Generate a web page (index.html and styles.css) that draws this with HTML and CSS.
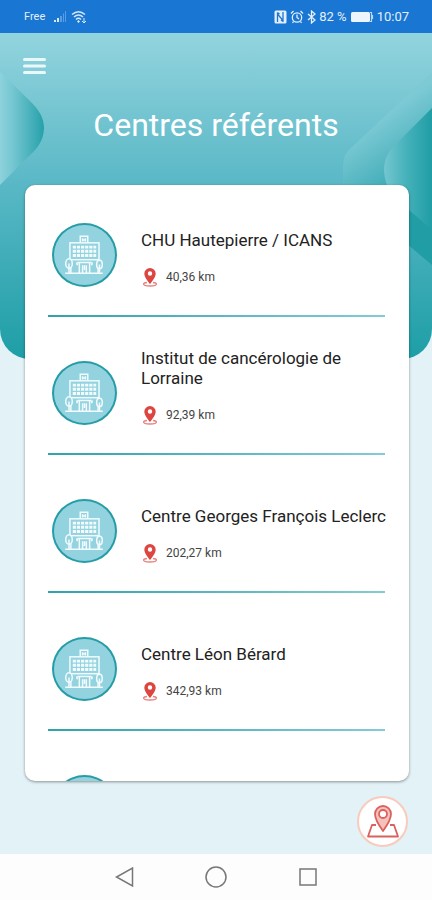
FILE: index.html
```html
<!DOCTYPE html>
<html lang="fr">
<head>
  <meta charset="UTF-8">
  <meta name="viewport" content="width=device-width, initial-scale=1.0">
  <title>Centres référents</title>
  <link rel="stylesheet" href="styles.css">
</head>
<body>
  <!-- shared icons -->
  <svg class="sprite" aria-hidden="true">
    <symbol id="hospital" viewBox="0 0 64 64">
      <g fill="none" stroke="#f2fbfd" stroke-width="1.6">
        <path d="M28 19v-7h8v7M30.500 17.500v-3.500M33.500 17.500v-3.500M30 16h4"/>
        <rect x="17" y="19" width="31" height="18"/>
        <path d="M20 23.500h25M20 28h25M20 32.500h25" stroke-width="3" stroke-dasharray="3.400 1"/>
        <path d="M18 37v14M47 37v14M25 40h15M27 40v11M38 40v11M24 40l1 3M41 40l-1 3M32.500 43v5M30.500 43v8M34.500 43v8M12 51.500h40"/>
        <ellipse cx="16" cy="41" rx="3.500" ry="5" fill="#93d3e0"/>
        <ellipse cx="48.500" cy="42" rx="3" ry="4.500" fill="#93d3e0"/>
        <path d="M16 41v10M48.500 42v9"/>
      </g>
    </symbol>
    <symbol id="pin" viewBox="0 0 16 20">
      <path d="M5 15.500c-2.200.3-3.500.9-3.500 1.600C1.500 18.200 4.500 19 8 19s6.500-.8 6.500-1.900c0-.7-1.300-1.300-3.500-1.600" fill="none" stroke="#e8837f" stroke-width="1.300"/>
      <path d="M8 1a5.700 5.700 0 0 0-5.700 5.700C2.300 10.500 8 17 8 17s5.700-6.500 5.700-10.300A5.700 5.700 0 0 0 8 1zm0 3.300a2.200 2.200 0 1 1 0 4.400 2.200 2.200 0 0 1 0-4.400z" fill="#dc4540" fill-rule="evenodd"/>
    </symbol>
  </svg>

  <div class="status-bar">
    <div class="status-group">
      <span class="carrier">Free</span>
      <svg width="14" height="12" viewBox="0 0 14 12">
        <path d="M1 9h2v2H1zM4 7h2v4H4z" fill="#d6e8fa"/>
        <path d="M7 5h2v6H7zM10 2.500h1v8.500h-1zM12 0h1v11h-1z" fill="#5b9de2"/>
      </svg>
      <svg width="16" height="14" viewBox="0 0 16 14">
        <path d="M1 4.500Q7.500-1 14 4.500M3 7q4.500-4 9 0M5 9.500q2.500-2.500 5 0" fill="none" stroke="#d6e8fa" stroke-width="1.500"/>
        <path d="M7.500 10l-1.500 1.500 1.500 1.500L9 11.500z" fill="#d6e8fa"/>
        <path d="M13 8v5M11 11l2 2 2-2" fill="none" stroke="#d6e8fa"/>
      </svg>
    </div>
    <div class="status-group status-right">
      <svg width="13" height="14" viewBox="0 0 13 14">
        <rect x="0.500" y="0.500" width="12" height="13" rx="1.500" fill="#e4effb"/>
        <path d="M3.500 12V4l5.500 6.500V2M3.500 2.500l2 1.500M9 11.500L7 10" fill="none" stroke="#1976d2" stroke-width="1.300"/>
      </svg>
      <svg width="14" height="14" viewBox="0 0 14 14" fill="none" stroke="#e4effb" stroke-width="1.300">
        <circle cx="7" cy="7.500" r="4.700"/>
        <path d="M7 4.500v3l2 1.500M1 3.500L3.500 1M13 3.500L10.500 1M3.500 11.500L2.500 13M10.500 11.500l1 1.500"/>
      </svg>
      <svg width="9" height="14" viewBox="0 0 9 14" fill="none" stroke="#e4effb" stroke-width="1.300">
        <path d="M1 4l7 6-3.500 3V1L8 4l-7 6"/>
      </svg>
      <span>82 %</span>
      <svg width="24" height="12" viewBox="0 0 24 12">
        <rect x="1" y="1" width="19" height="10" rx="1.500" fill="#eef5fc"/>
        <path d="M20 1.500h1.500v9H20M22.500 4v4" fill="none" stroke="#b9d7f5" stroke-width="1.200"/>
      </svg>
      <span class="clock">10:07</span>
    </div>
  </div>

  <main class="screen">
    <header class="header">
      <svg class="deco deco-left" width="46" height="120" viewBox="0 0 46 120">
        <defs>
          <linearGradient id="leftFade">
            <stop offset="0" stop-color="#8dd2dc"/>
            <stop offset="0.300" stop-color="#74c6d1"/>
            <stop offset="1" stop-color="#26a1aa"/>
          </linearGradient>
        </defs>
        <path d="M0 2L31 32C38 39 44 47 44 58C44 70 37 79 30 85L0 115z" fill="url(#leftFade)"/>
      </svg>
      <svg class="deco deco-right" width="92" height="200" viewBox="0 0 92 200">
        <defs>
          <linearGradient id="band" gradientUnits="userSpaceOnUse" x1="30" y1="55" x2="62" y2="100">
            <stop offset="0" stop-color="#7dcad5"/>
            <stop offset="1" stop-color="#46afba"/>
          </linearGradient>
          <linearGradient id="rightFade">
            <stop offset="0" stop-color="#74c6d0"/>
            <stop offset="0.500" stop-color="#42b0b9"/>
            <stop offset="1" stop-color="#209da5"/>
          </linearGradient>
        </defs>
        <path d="M92 2L9 80C3 86 3 92 3 104V120L60 166L92 160z" fill="url(#band)"/>
        <path d="M60 130L92 158V195L60 168z" fill="#209da5"/>
        <path d="M92 38L54 76C44 86 42 98 46 112C50 126 60 132 69 140L92 160z" fill="url(#rightFade)"/>
      </svg>
      <button class="menu-button" type="button" aria-label="Menu">
        <svg width="24" height="18" viewBox="0 0 24 18">
          <path d="M1.500 2.500h20M1.500 9h20M1.500 15.500h20" stroke="#eaf8fa" stroke-width="3" stroke-linecap="round"/>
        </svg>
      </button>
      <h1>Centres référents</h1>
    </header>

    <section class="card">
      <ul class="centers">
        <li class="center">
          <span class="avatar"><svg width="60" height="60"><use href="#hospital"/></svg></span>
          <div class="info">
            <h2>CHU Hautepierre / ICANS</h2>
            <p class="distance"><svg width="18" height="20"><use href="#pin"/></svg>40,36 km</p>
          </div>
        </li>
        <li class="center">
          <span class="avatar"><svg width="60" height="60"><use href="#hospital"/></svg></span>
          <div class="info">
            <h2>Institut de cancérologie de Lorraine</h2>
            <p class="distance"><svg width="18" height="20"><use href="#pin"/></svg>92,39 km</p>
          </div>
        </li>
        <li class="center">
          <span class="avatar"><svg width="60" height="60"><use href="#hospital"/></svg></span>
          <div class="info">
            <h2>Centre Georges François Leclerc</h2>
            <p class="distance"><svg width="18" height="20"><use href="#pin"/></svg>202,27 km</p>
          </div>
        </li>
        <li class="center">
          <span class="avatar"><svg width="60" height="60"><use href="#hospital"/></svg></span>
          <div class="info">
            <h2>Centre Léon Bérard</h2>
            <p class="distance"><svg width="18" height="20"><use href="#pin"/></svg>342,93 km</p>
          </div>
        </li>
        <li class="center">
          <span class="avatar"><svg width="60" height="60"><use href="#hospital"/></svg></span>
        </li>
      </ul>
    </section>

    <button class="map-button" type="button" aria-label="Carte">
      <svg width="34" height="36" viewBox="0 0 34 36" fill="none" stroke="#d9625f" stroke-width="1.800" stroke-linejoin="round">
        <path d="M10 21H6L2 32.500h30L28 21h-4"/>
        <path d="M17 2a8 8 0 0 0-8 8c0 6 8 17 8 17s8-11 8-17a8 8 0 0 0-8-8z" fill="#f8c0bb"/>
        <circle cx="17" cy="10" r="4" fill="#fff"/>
      </svg>
    </button>
  </main>

  <nav class="nav-bar">
    <button type="button" aria-label="Retour">
      <svg width="22" height="22" viewBox="0 0 22 22"><path d="M19.500 2v18L3.500 11z"/></svg>
    </button>
    <button type="button" aria-label="Accueil">
      <svg width="22" height="22" viewBox="0 0 22 22"><circle cx="11" cy="11" r="10"/></svg>
    </button>
    <button type="button" aria-label="Applications">
      <svg width="22" height="22" viewBox="0 0 22 22"><rect x="3" y="3" width="16" height="16"/></svg>
    </button>
  </nav>
</body>
</html>
```
FILE: styles.css
```css
* {
  box-sizing: border-box;
}
body {
  margin: 0;
  height: 100vh;
  display: flex;
  flex-direction: column;
  background: #e2f2f7;
  font-family: Roboto, "Liberation Sans", sans-serif;
  color: #222;
}
h1, h2, p, ul {
  margin: 0;
  padding: 0;
  font-weight: 400;
}
button {
  border: 0;
  padding: 0;
  background: none;
  cursor: pointer;
}
svg {
  display: block;
}
.sprite {
  display: none;
}

/* status bar */
.status-bar {
  display: flex;
  flex: none;
  justify-content: space-between;
  align-items: center;
  height: 33px;
  padding: 0 23px 0 24px;
  background: #1976d2;
  color: #e4effb;
  font-size: 13px;
}
.status-group {
  display: flex;
  align-items: center;
  gap: 4px;
}
.status-right {
  gap: 3px;
}
.carrier {
  margin-right: 4px;
  font-size: 11px;
}

/* header */
.screen {
  position: relative;
  display: flex;
  flex-direction: column;
  flex: 1;
  min-height: 0;
}
.header {
  position: relative;
  flex: none;
  height: 326px;
  padding: 24px 23px;
  overflow: hidden;
  border-radius: 0 0 30px 30px;
  background: linear-gradient(#92d4de, #5ab8c6 46%, #1d9ea6);
}
.deco {
  position: absolute;
}
.deco-left {
  top: 37px;
  left: 0;
}
.deco-right {
  top: 37px;
  right: 0;
}
.menu-button {
  position: relative;
  display: block;
}
.header h1 {
  position: relative;
  margin-top: 30px;
  color: #fff;
  font-size: 32px;
  line-height: 40px;
  text-align: center;
}

/* list */
.card {
  position: relative;
  flex: 1;
  min-height: 0;
  margin: -174px 23px 73px 25px;
  padding: 0 24px 0 23px;
  overflow: hidden;
  border-radius: 10px;
  background: #fff;
  box-shadow: 0 1px 3px rgba(0, 0, 0, 0.4);
}
.centers {
  list-style: none;
}
.center {
  display: flex;
  align-items: flex-end;
  gap: 24px;
  min-height: 138px;
  padding: 20px 0 28px 4px;
  border-bottom: 2px solid;
  border-image: linear-gradient(to right, #2fa3ac, #84cbd5) 1;
}
.center:first-child {
  min-height: 132px;
}
.avatar {
  flex: none;
  width: 65px;
  height: 64px;
  border: 2px solid #269ca6;
  border-radius: 50%;
  background: #93d3e0;
}
.info {
  flex: 1;
  margin-right: -12px;
}
.info h2 {
  font-size: 17px;
  line-height: 20px;
}
.distance {
  display: flex;
  align-items: center;
  gap: 7px;
  margin-top: 17px;
  color: #444;
  font-size: 12px;
  line-height: 20px;
}

/* floating map button */
.map-button {
  position: absolute;
  right: 24px;
  bottom: 7px;
  display: grid;
  place-items: center;
  width: 51px;
  height: 51px;
  border: 2px solid #f8cbbd;
  border-radius: 50%;
  background: #fff;
}

/* system navigation */
.nav-bar {
  display: flex;
  flex: none;
  justify-content: center;
  align-items: center;
  gap: 70px;
  height: 46px;
  background: #fdfdfd;
}
.nav-bar svg {
  fill: none;
  stroke: #777;
  stroke-width: 1.5;
}
```
